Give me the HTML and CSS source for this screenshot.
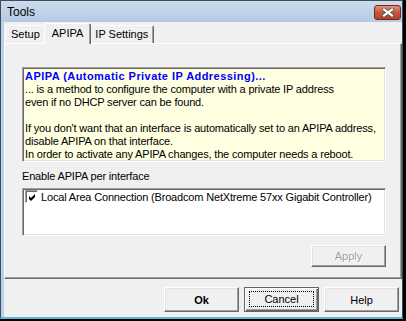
FILE: index.html
```html
<!DOCTYPE html>
<html lang="en">
<head>
    <meta charset="UTF-8">
    <meta name="viewport" content="width=device-width, initial-scale=1.0">
    <title>Tools</title>
    <link rel="stylesheet" href="styles.css">
</head>
<body>
    <div class="window">
        <div class="titlebar">
            <span class="title">Tools</span>
            <button type="button" class="close" aria-label="Close">
                <svg width="12" height="9" viewBox="0 0 12 9">
                    <path d="M2 1.5 L10 7.5 M10 1.5 L2 7.5" stroke="#4a4a4a" stroke-width="4" stroke-linecap="square"/>
                    <path d="M2 1.5 L10 7.5 M10 1.5 L2 7.5" stroke="#fff" stroke-width="2.2" stroke-linecap="square"/>
                </svg>
            </button>
        </div>
        <div class="client">
            <!-- Tab strip -->
            <div class="tabs">
                <div class="tab">Setup</div>
                <div class="tab active">APIPA</div>
                <div class="tab">IP Settings</div>
            </div>
            <div class="panel">
                <div class="info">
                    <div class="info-title">APIPA (Automatic Private IP Addressing)...</div>
                    <div>... is a method to configure the computer with a private IP address</div>
                    <div>even if no DHCP server can be found.</div>
                    <div>&nbsp;</div>
                    <div>If you don't want that an interface is automatically set to an APIPA address,</div>
                    <div>disable APIPA on that interface.</div>
                    <div>In order to activate any APIPA changes, the computer needs a reboot.</div>
                </div>
                <div class="label">Enable APIPA per interface</div>
                <div class="list">
                    <div class="item">
                        <span class="check">
                            <svg width="9" height="9" viewBox="0 0 9 9">
                                <polygon points="1,3 3,5 7,1 7,4 3,8 1,6" fill="#000"/>
                            </svg>
                        </span>
                        Local Area Connection (Broadcom NetXtreme 57xx Gigabit Controller)
                    </div>
                </div>
                <div class="apply-row">
                    <button type="button" class="btn apply" disabled>Apply</button>
                </div>
            </div>
            <div class="footer">
                <button type="button" class="btn ok">Ok</button>
                <button type="button" class="btn default"><span class="focus">Cancel</span></button>
                <button type="button" class="btn">Help</button>
            </div>
        </div>
    </div>
</body>
</html>
```

FILE: styles.css
```css
* {
    box-sizing: border-box;
}

body {
    margin: 0;
    padding: 0;
    background-color: #000;
    font-family: "Liberation Sans", Arial, sans-serif;
    font-size: 11px;
    color: #000;
}

.window {
    width: 403px;
    height: 319px;
    display: flex;
    flex-direction: column;
    background-color: #b9d1ea;
    border: 1px solid #3c4d62;
    border-bottom: 2px solid #62b4dc;
}

.titlebar {
    flex-shrink: 0;
    height: 21px;
    display: flex;
    align-items: center;
    justify-content: space-between;
    padding: 0 1px 0 6px;
    background: linear-gradient(#cddbea, #b4cae4);
}

.title {
    font-size: 12px;
    margin-top: 1px;
}

.close {
    width: 27px;
    height: 15px;
    margin-top: 2px;
    padding: 0;
    display: flex;
    align-items: center;
    justify-content: center;
    border: 1px solid #6e2a1c;
    border-radius: 3px;
    background: linear-gradient(#e5907c, #c8553b 50%, #b8402a);
}

.client {
    flex: 1;
    margin-left: 3px;
    display: flex;
    flex-direction: column;
    background-color: #f0f0f0;
}

.tabs {
    flex-shrink: 0;
    height: 21px;
    display: flex;
    align-items: flex-end;
    padding-left: 1px;
}

.tab {
    height: 18px;
    padding: 0 5px;
    line-height: 16px;
    border: 1px solid #fff;
    border-bottom: none;
    border-right-color: #696969;
    border-radius: 2px 2px 0 0;
    box-shadow: inset -1px 0 0 #a0a0a0;
    background-color: #f0f0f0;
}

.tab.active {
    position: relative;
    z-index: 1;
    height: 21px;
    margin: 0 -2px -1px;
    padding: 0 7px;
    line-height: 18px;
}

.panel {
    flex-shrink: 0;
    height: 236px;
    padding: 23px 0 0 17px;
    border: 1px solid;
    border-color: #fff #696969 #696969 #fff;
    box-shadow: inset -1px -1px 0 #a0a0a0;
    letter-spacing: -0.17px;
}

.info {
    width: 364px;
    height: 95px;
    padding: 2px 0 0 2px;
    line-height: 13px;
    background-color: #ffffe1;
    border: 1px solid;
    border-color: #a0a0a0 #fff #fff #a0a0a0;
    box-shadow: inset 1px 1px 0 #696969, inset -1px -1px 0 #e3e3e3;
}

.info div {
    white-space: nowrap;
}

.info .info-title {
    color: #0000ff;
    font-weight: bold;
    letter-spacing: 0.45px;
}

.label {
    margin-top: 8px;
    line-height: 13px;
}

.list {
    width: 364px;
    height: 48px;
    margin-top: 5px;
    padding: 1px 0 0 2px;
    background-color: #fff;
    border: 1px solid;
    border-color: #a0a0a0 #fff #fff #a0a0a0;
    box-shadow: inset 1px 1px 0 #696969, inset -1px -1px 0 #e3e3e3;
}

.item {
    display: flex;
    align-items: center;
    height: 13px;
    white-space: nowrap;
}

.check {
    width: 13px;
    height: 13px;
    margin-right: 3px;
    padding: 2px 0 0 2px;
    display: flex;
    border: 1px solid;
    border-color: #a0a0a0 #fff #fff #a0a0a0;
    box-shadow: inset 1px 1px 0 #696969;
    background-color: #fff;
}

.apply-row {
    width: 364px;
    display: flex;
    justify-content: flex-end;
    margin-top: 9px;
}

.btn {
    width: 75px;
    height: 25px;
    padding: 0;
    font-family: inherit;
    font-size: 11px;
    letter-spacing: 0;
    color: #000;
    background-color: #f0f0f0;
    border: 1px solid;
    border-color: #fff #696969 #696969 #fff;
    box-shadow: inset -1px -1px 0 #a0a0a0, inset 1px 1px 0 #e3e3e3;
}

.btn.apply {
    height: 22px;
    color: #a0a0a0;
    text-shadow: 1px 1px 0 #fff;
}

.btn.ok {
    font-weight: bold;
}

.btn.default {
    display: flex;
    padding: 3px 4px 4px 4px;
    border-color: #646464;
    box-shadow: inset 1px 1px 0 #fff, inset -1px -1px 0 #696969, inset -2px -2px 0 #a0a0a0;
}

.focus {
    flex: 1;
    display: flex;
    align-items: center;
    justify-content: center;
    border: 1px dotted #000;
}

.footer {
    flex-shrink: 0;
    display: flex;
    justify-content: flex-end;
    gap: 5px;
    padding: 8px 3px 0 0;
}
```
